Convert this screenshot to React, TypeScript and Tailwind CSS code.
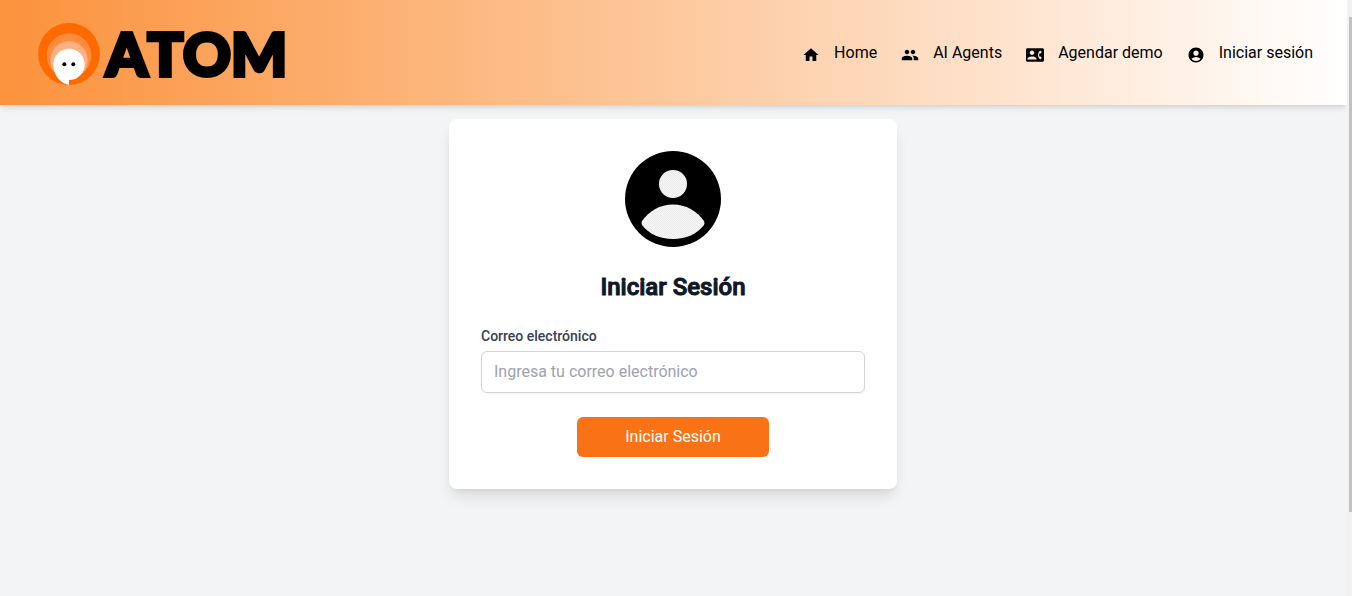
import { MdAccountCircle, MdContactPhone, MdHome, MdPeople } from 'react-icons/md';

const links = [
  { label: 'Home', Icon: MdHome },
  { label: 'AI Agents', Icon: MdPeople },
  { label: 'Agendar demo', Icon: MdContactPhone },
  { label: 'Iniciar sesión', Icon: MdAccountCircle },
];

function Logo() {
  return (
    <a href="#" className="flex items-center gap-1.5 text-black">
      <svg viewBox="0 0 186 186" className="mt-0.5 size-[62px]" aria-hidden="true">
        <circle cx="93" cy="93" r="93" fill="#ff6a00" />
        <circle cx="93" cy="98" r="67" fill="#ff8c3d" />
        <circle cx="93" cy="111" r="56" fill="#ffb183" />
        <path d="M93 186C68 182 46 158 46 124A47 47 0 1 1 93 171Z" fill="#fff" />
        <circle cx="79" cy="124" r="6" />
        <circle cx="106" cy="124" r="6" />
      </svg>
      <span className="font-['Lato',sans-serif] text-[59px] leading-none font-black [font-kerning:none] [-webkit-text-stroke:4px_black]">
        ATOM
      </span>
    </a>
  );
}

function Header() {
  return (
    <header className="flex h-[105px] items-center justify-between bg-[linear-gradient(to_right,#fb923c,#ffffff)] pt-px pr-[34px] pl-[38px] shadow-md">
      <Logo />
      <nav className="flex gap-6">
        {links.map(({ label, Icon }) => (
          <a key={label} href="#" className="flex items-end gap-3.5 text-base text-black">
            <Icon className="mb-px size-[18px]" aria-hidden="true" />
            {label}
          </a>
        ))}
      </nav>
    </header>
  );
}

function Avatar() {
  return (
    <svg viewBox="0 0 96 96" className="size-24" aria-hidden="true">
      <defs>
        <pattern id="checker" width="2" height="2" patternUnits="userSpaceOnUse">
          <rect width="2" height="2" fill="#f6f6f6" />
          <rect width="1" height="1" fill="#ebebeb" />
          <rect x="1" y="1" width="1" height="1" fill="#ebebeb" />
        </pattern>
      </defs>
      <circle cx="48" cy="48" r="48" />
      <circle cx="48" cy="33" r="14" fill="url(#checker)" />
      <path
        d="M17 70C24 60 35 53.500 48 53.500S72 60 79 70Q80 72 79 74C72 83 61 88 48 88S24 83 17 74Q16 72 17 70Z"
        fill="url(#checker)"
      />
    </svg>
  );
}

function LoginCard() {
  return (
    <section className="flex w-full max-w-md flex-col items-center rounded-lg bg-white p-8 shadow-lg">
      <Avatar />
      <h1 className="mt-6 mb-[23px] text-2xl font-medium text-gray-900 [-webkit-text-stroke:1px]">Iniciar Sesión</h1>
      <form className="flex w-full flex-col" onSubmit={(event) => event.preventDefault()}>
        <label htmlFor="email" className="mb-[5px] text-sm font-medium text-gray-700">
          Correo electrónico
        </label>
        <input
          id="email"
          type="email"
          placeholder="Ingresa tu correo electrónico"
          className="w-full rounded-md border border-[#d1d5db] px-3 py-2 text-base shadow-xs placeholder:text-[#9ca3af]"
        />
        <button type="submit" className="mt-6 w-1/2 self-center rounded-md bg-[#f97316] px-4 py-2 text-base text-white">
          Iniciar Sesión
        </button>
      </form>
    </section>
  );
}

export default function App() {
  return (
    <div className="flex min-h-screen bg-[#f3f4f6] font-['Roboto',sans-serif]">
      <div className="min-w-0 flex-1">
        <Header />
        <main className="flex justify-center pt-3.5 pr-px">
          <LoginCard />
        </main>
      </div>
      <div className="flex w-[5px] flex-col items-end bg-[#f1f1f1] pt-[17px]" aria-hidden="true">
        <div className="h-[495px] w-[3px] bg-[#c1c1c1]" />
      </div>
    </div>
  );
}
